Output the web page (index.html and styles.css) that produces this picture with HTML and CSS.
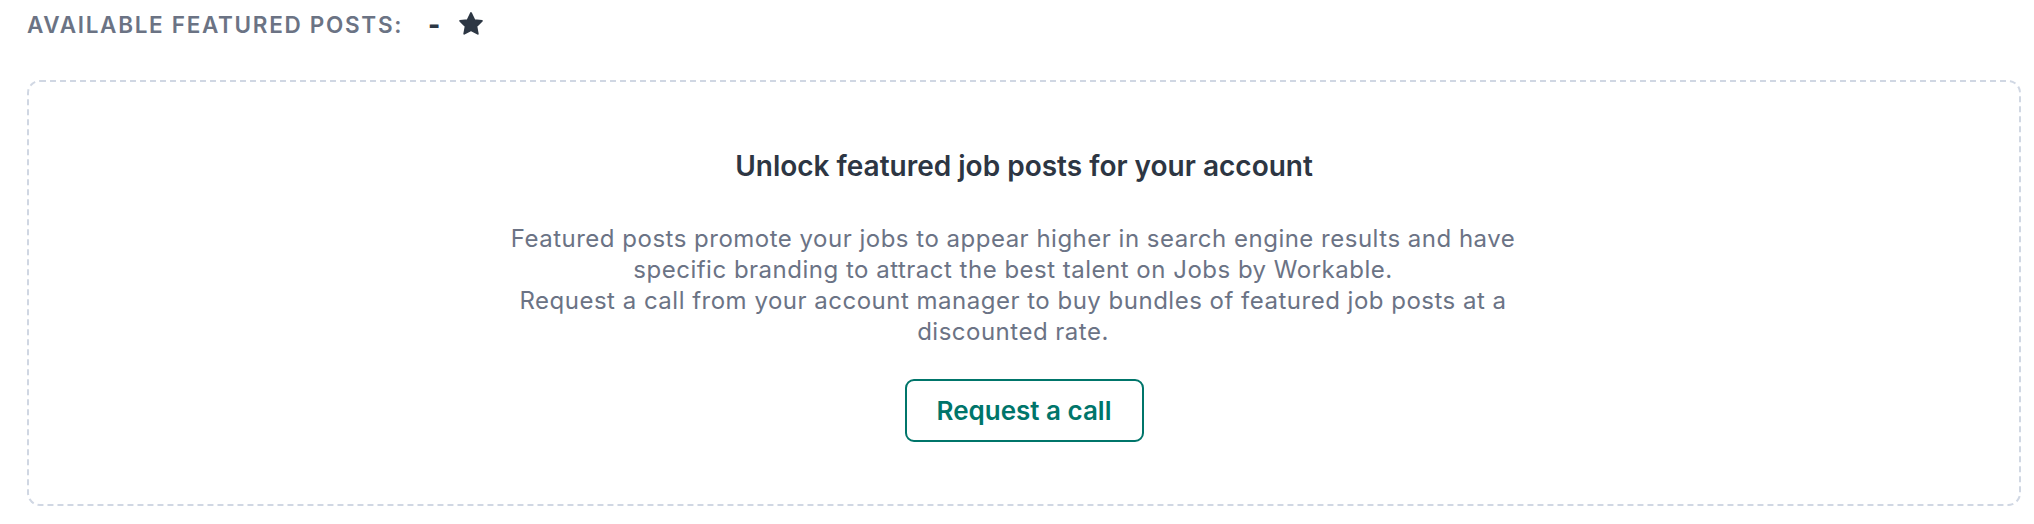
FILE: index.html
```html
<!DOCTYPE html>
<html lang="en">
<head>
    <meta charset="UTF-8">
    <meta name="viewport" content="width=device-width, initial-scale=1.0">
    <title>Featured posts</title>
    <link rel="stylesheet" href="styles.css">
</head>
<body>
    <div class="page">
        <div class="featured-header">
            <span class="featured-label">Available featured posts:</span>
            <span class="featured-count">-</span>
            <svg class="star" viewBox="0 0 24 24" width="26" height="26" aria-hidden="true">
                <path d="M12 1.8l3.1 6.5 7 .9-5.1 4.9 1.3 7-6.3-3.4-6.3 3.4 1.3-7-5.1-4.9 7-.9z" fill="#2d3744" stroke="#2d3744" stroke-width="1.6" stroke-linejoin="round"/>
            </svg>
        </div>

        <section class="unlock-box">
            <h2 class="unlock-title">Unlock featured job posts for your account</h2>
            <p class="unlock-text">
                Featured posts promote your jobs to appear higher in search engine results and have specific branding to attract the best talent on Jobs by Workable.<br>
                Request a call from your account manager to buy bundles of featured job posts at a discounted rate.
            </p>
            <button class="btn-outline" type="button">Request a call</button>
        </section>
    </div>
</body>
</html>
```

FILE: styles.css
```css
body {
    margin: 0;
    padding: 0;
    background-color: #ffffff;
    font-family: Inter, "Noto Sans", sans-serif;
}

.page {
    padding: 0 13px 17px 27px;
}

.featured-header {
    display: flex;
    align-items: center;
    height: 48px;
    margin-bottom: 32px;
}

.featured-label {
    font-size: 22.5px;
    font-weight: 600;
    letter-spacing: 0.075em;
    text-transform: uppercase;
    color: #6b7384;
}

.featured-count {
    margin-left: 25px;
    font-size: 26px;
    font-weight: 800;
    color: #2d3744;
}

.star {
    margin-left: 18px;
}

.unlock-box {
    display: flex;
    flex-direction: column;
    align-items: center;
    border: 2px dashed #d0d7e3;
    border-radius: 13px;
    padding: 66px 20px 62px;
    text-align: center;
}

.unlock-title {
    margin: 0;
    font-size: 28px;
    line-height: 36px;
    font-weight: 600;
    color: #2d3643;
}

.unlock-text {
    margin: 39px 22px 0 0;
    max-width: 1040px;
    font-size: 24px;
    line-height: 31px;
    letter-spacing: 0.5px;
    color: #6b7385;
}

.btn-outline {
    margin-top: 32px;
    width: 239px;
    height: 63px;
    border: 2px solid #00756a;
    border-radius: 9px;
    background-color: #ffffff;
    color: #00756a;
    font-family: Inter, "Noto Sans", sans-serif;
    font-size: 26px;
    font-weight: 600;
    cursor: pointer;
}

.btn-outline:hover {
    background-color: #f0f8f7;
}
```
